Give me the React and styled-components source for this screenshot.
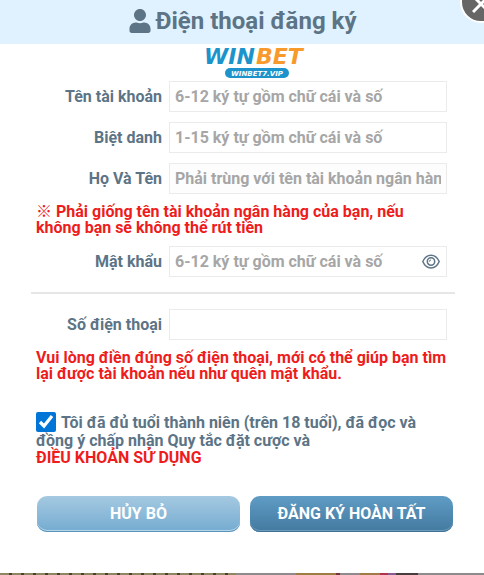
import React, { useState } from 'react';
import styled, { createGlobalStyle } from 'styled-components';
import { FaUser } from 'react-icons/fa';

const GlobalStyle = createGlobalStyle`
  * {
    box-sizing: border-box;
  }
  body {
    margin: 0;
    background-color: #8e8b8c;
    color: #5c7485;
    font-family: Roboto, 'Noto Sans CJK SC', sans-serif;
    font-size: 16px;
    font-weight: 700;
  }
`;

const Modal = styled.main`
  position: relative;
  overflow: hidden;
  padding-bottom: 41px;
  background-color: #fff;
`;

const Header = styled.header`
  display: flex;
  align-items: center;
  justify-content: center;
  gap: 4px;
  height: 44px;
  padding-bottom: 2px;
  background-color: #e0f2ff;
`;

const Title = styled.h1`
  margin: 0;
  font-size: 24px;
  line-height: 28px;
`;

const CloseButton = styled.button`
  position: absolute;
  top: -19px;
  right: -18px;
  display: flex;
  align-items: center;
  justify-content: center;
  width: 42px;
  height: 42px;
  padding: 4px 0 0;
  border: 2px solid #fff;
  border-radius: 50%;
  background-color: #666;
  cursor: pointer;
`;

const Logo = styled.svg`
  display: block;
  width: 112px;
  height: 37px;
  margin: 0 auto;
  overflow: visible;
`;

const LogoBar = styled.div`
  padding-left: 30px;
`;

const Form = styled.form`
  padding: 0 29px 0 31px;
`;

const Fields = styled.div`
  display: grid;
  gap: 10px;
  padding: 0 8px 0 6px;
`;

const Row = styled.div`
  display: flex;
  align-items: center;
  gap: 7px;
`;

const Label = styled.label`
  flex: none;
  width: 125px;
  text-align: right;
`;

const Field = styled.div`
  display: flex;
  flex: 1;
  align-items: center;
  min-width: 0;
  height: 31px;
  padding: 0 5px;
  border: 1px solid #ebebeb;
  background-color: ${(props) => (props.$tinted ? '#fdfdfd' : '#fff')};
`;

const Input = styled.input`
  flex: 1;
  min-width: 0;
  height: 100%;
  padding: 0;
  border: 0;
  outline: none;
  background: transparent;
  color: #5c7485;
  font: inherit;
  &::placeholder {
    color: #a6a6a6;
    opacity: 1;
  }
`;

const EyeButton = styled.button`
  display: flex;
  padding: 0;
  border: 0;
  margin-right: 1px;
  background: none;
  color: #5c7485;
  cursor: pointer;
`;

const Note = styled.p`
  margin: 0;
  padding: ${(props) => props.$padding};
  color: #ee1c1c;
  line-height: 16px;
`;

const Divider = styled.hr`
  height: 2px;
  margin: 15px 0;
  border: 0;
  background-color: #e6e6e6;
`;

const Agreement = styled.div`
  padding: 30px 24px 0 5px;
  line-height: 17px;
`;

const Checkbox = styled.input`
  width: 20px;
  height: 20px;
  margin: 0 5px 0 0;
  accent-color: #0075d8;
  vertical-align: text-bottom;
`;

const Terms = styled.a`
  display: block;
  color: #ee1c1c;
  line-height: 18px;
  text-decoration: none;
`;

const Actions = styled.div`
  display: flex;
  gap: 10px;
  padding: 29px 2px 0 6px;
`;

const Button = styled.button`
  flex: 1;
  height: 36px;
  padding: 0 0 2px;
  border: 0;
  border-radius: 10px;
  background: ${(props) =>
    props.$primary
      ? 'linear-gradient(#5f9cc5, #43799f)'
      : 'linear-gradient(#a5c9e1, #74abd0)'};
  box-shadow: inset 0 -1px 0 ${(props) => (props.$primary ? '#3d7196' : '#5b93b9')},
    inset 0 -2px 0 ${(props) => (props.$primary ? '#6d9cbc' : '#b5d6ea')};
  color: #fff;
  font: inherit;
  cursor: pointer;
`;

// the lobby page that shows below the dialog
const Backdrop = styled.div`
  height: 2px;
  background: linear-gradient(
      90deg,
      transparent 236px,
      #8e8b8c 236px 296px,
      #a07c45 296px 336px,
      #7a3438 336px 340px,
      #8e8b8c 340px 360px,
      #a07c45 360px 380px,
      #b3304e 380px 388px,
      #8b5b96 388px 396px,
      #4a3b3d 396px 418px,
      #8e8b8c 418px
    ),
    repeating-linear-gradient(90deg, #928561 0 9px, #4c402f 9px 12px);
`;

const fields = [
  { id: 'account', label: 'Tên tài khoản', placeholder: '6-12 ký tự gồm chữ cái và số' },
  { id: 'nickname', label: 'Biệt danh', placeholder: '1-15 ký tự gồm chữ cái và số' },
  {
    id: 'fullname',
    label: 'Họ Và Tên',
    placeholder: 'Phải trùng với tên tài khoản ngân hàng',
    tinted: true,
  },
];

const WinbetLogo = () => (
  <Logo viewBox='0 0 112 37' role='img' aria-label='Winbet'>
    <text
      x='2'
      y='20'
      fontFamily='DejaVu Sans'
      fontSize='22'
      fontWeight='700'
      fontStyle='italic'
      fill='#1c93cb'
    >
      WIN
    </text>
    <text
      x='54'
      y='20'
      fontFamily='DejaVu Sans'
      fontSize='22'
      fontWeight='700'
      fontStyle='italic'
      fill='#f79a2b'
    >
      BET
    </text>
    <rect x='23' y='24' width='64' height='10' rx='5' fill='#1c93cb' />
    <text
      x='55'
      y='32'
      textAnchor='middle'
      fontFamily='DejaVu Sans'
      fontSize='7'
      fontWeight='700'
      fontStyle='italic'
      fill='#fff'
    >
      WINBET7.VIP
    </text>
  </Logo>
);

const EyeIcon = () => (
  <svg width='18' height='16' viewBox='0 0 18 16' fill='none' stroke='currentColor'>
    <path d='M0.800 7.500C4.400 -1 13.600 -1 17.200 7.500C13.600 16 4.400 16 0.800 7.500Z' strokeWidth='1.500' />
    <circle cx='9' cy='7.500' r='3.700' strokeWidth='1.500' />
    <path d='M7.300 7.700A1.700 1.700 0 0 1 9 6' strokeWidth='1' />
  </svg>
);

const App = () => {
  const [visible, setVisible] = useState(false);

  return (
    <>
      <GlobalStyle />
      <Modal>
        <Header>
          <FaUser size={24} aria-hidden='true' />
          <Title>Điện thoại đăng ký</Title>
        </Header>
        <CloseButton type='button' aria-label='Đóng'>
          <svg width='18' height='18' viewBox='0 0 18 18' stroke='#fff' strokeWidth='3'>
            <path d='M1 1L17 17M17 1L1 17' />
          </svg>
        </CloseButton>
        <Form onSubmit={(e) => e.preventDefault()}>
          <LogoBar>
            <WinbetLogo />
          </LogoBar>
          <Fields>
            {fields.map((field) => (
              <Row key={field.id}>
                <Label htmlFor={field.id}>{field.label}</Label>
                <Field $tinted={field.tinted}>
                  <Input id={field.id} type='text' placeholder={field.placeholder} />
                </Field>
              </Row>
            ))}
          </Fields>
          <Note $padding='10px 8px 10px 5px'>
            ※ Phải giống tên tài khoản ngân hàng của bạn, nếu không bạn sẽ không thể rút tiền
          </Note>
          <Fields>
            <Row>
              <Label htmlFor='password'>Mật khẩu</Label>
              <Field>
                <Input
                  id='password'
                  type={visible ? 'text' : 'password'}
                  placeholder='6-12 ký tự gồm chữ cái và số'
                />
                <EyeButton
                  type='button'
                  aria-label='Hiện mật khẩu'
                  onClick={() => setVisible(!visible)}
                >
                  <EyeIcon />
                </EyeButton>
              </Field>
            </Row>
          </Fields>
          <Divider />
          <Fields>
            <Row>
              <Label htmlFor='phone'>Số điện thoại</Label>
              <Field>
                <Input id='phone' type='tel' />
              </Field>
            </Row>
          </Fields>
          <Note $padding='10px 0 0 5px'>
            Vui lòng điền đúng số điện thoại, mới có thể giúp bạn tìm lại được tài khoản nếu như
            quên mật khẩu.
          </Note>
          <Agreement>
            <Checkbox id='agree' type='checkbox' defaultChecked />
            <label htmlFor='agree'>
              Tôi đã đủ tuổi thành niên (trên 18 tuổi), đã đọc và đồng ý chấp nhận Quy tắc đặt cược
              và
            </label>
            <Terms href='#terms'>ĐIỀU KHOẢN SỬ DỤNG</Terms>
          </Agreement>
          <Actions>
            <Button type='button'>HỦY BỎ</Button>
            <Button type='submit' $primary>
              ĐĂNG KÝ HOÀN TẤT
            </Button>
          </Actions>
        </Form>
      </Modal>
      <Backdrop />
    </>
  );
};

export default App;
